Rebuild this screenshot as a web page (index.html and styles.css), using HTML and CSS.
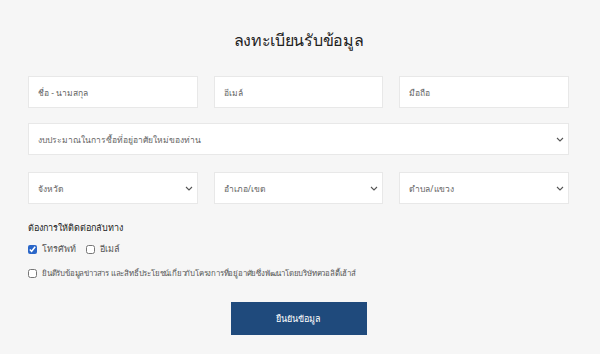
FILE: index.html
```html
<!DOCTYPE html>
<html>
<head>
	<meta charset="utf-8"/>
	<title>ลงทะเบียนรับข้อมูล</title>
	<link rel="stylesheet" href="styles.css">
</head>
<body>
	<div class="wrapper">
		<h1 class="title">ลงทะเบียนรับข้อมูล</h1>
		<form class="regform">
			<div class="row three first">
				<input type="text" class="field" placeholder="ชื่อ - นามสกุล" />
				<input type="text" class="field" placeholder="อีเมล์" />
				<input type="text" class="field" placeholder="มือถือ" />
			</div>
			<div class="row budget">
				<div class="selbox">
					<select class="field">
						<option>งบประมาณในการซื้อที่อยู่อาศัยใหม่ของท่าน</option>
					</select>
					<svg class="chev" width="8" height="5" viewBox="0 0 8 5"><path d="M1 1l3 3 3-3" fill="none" stroke="#555" stroke-width="1.1"/></svg>
				</div>
			</div>
			<div class="row three">
				<div class="selbox">
					<select class="field"><option>จังหวัด</option></select>
					<svg class="chev" width="8" height="5" viewBox="0 0 8 5"><path d="M1 1l3 3 3-3" fill="none" stroke="#555" stroke-width="1.1"/></svg>
				</div>
				<div class="selbox">
					<select class="field"><option>อำเภอ/เขต</option></select>
					<svg class="chev" width="8" height="5" viewBox="0 0 8 5"><path d="M1 1l3 3 3-3" fill="none" stroke="#555" stroke-width="1.1"/></svg>
				</div>
				<div class="selbox">
					<select class="field"><option>ตำบล/แขวง</option></select>
					<svg class="chev" width="8" height="5" viewBox="0 0 8 5"><path d="M1 1l3 3 3-3" fill="none" stroke="#555" stroke-width="1.1"/></svg>
				</div>
			</div>
			<div class="contact">
				<div class="lbl">ต้องการให้ติดต่อกลับทาง</div>
				<div class="checks">
					<label class="chk"><input type="checkbox" checked /> โทรศัพท์</label>
					<label class="chk"><input type="checkbox" /> อีเมล์</label>
				</div>
				<label class="chk consent"><input type="checkbox" /> ยินดีรับข้อมูลข่าวสาร และสิทธิ์ประโยชน์เกี่ยวกับโครงการที่อยู่อาศัยซึ่งพัฒนาโดยบริษัทควอลิตี้เฮ้าส์</label>
			</div>
			<div class="actions">
				<button type="button" class="submit">ยืนยันข้อมูล</button>
			</div>
		</form>
	</div>
</body>
</html>
```
FILE: styles.css
```css
html, body { height:100%; overflow:hidden; }
body { margin:0; background:#f6f6f6; font-family:"Noto Sans", "DejaVu Sans", sans-serif; color:#333; }
.wrapper { padding:25px 31px 0 28px; }
.title { margin:0; font-size:16px; line-height:30px; font-weight:400; text-align:center; color:#222; letter-spacing:-0.3px; }
.regform { margin-top:21px; }
.row { display:flex; gap:16px; }
.row.three > * { flex:1; min-width:0; }
.row > .selbox { flex:1; }
.row.first { margin-bottom:15px; }
.row.budget { margin-bottom:17px; }
.field { box-sizing:border-box; width:100%; height:32px; border:1px solid #e8e8e8; background:#fff; padding:0 9px; font-family:inherit; font-size:8.5px; color:#666; outline:none; border-radius:0; }
.field::placeholder { color:#666; }
select.field { appearance:none; -webkit-appearance:none; }
.selbox { position:relative; }
.chev { position:absolute; right:5px; top:14px; pointer-events:none; }
.contact { margin-top:17px; font-size:9px; }
.lbl { color:#222; line-height:14px; }
.checks { display:flex; gap:10px; margin-top:7px; }
.chk { display:flex; align-items:center; gap:5px; color:#555; line-height:14px; }
.chk input { margin:0; width:9px; height:9px; accent-color:#2a66c8; }
.consent { margin-top:10px; font-size:7.8px; letter-spacing:-0.2px; }
.actions { display:flex; justify-content:center; margin-top:22px; }
.submit { width:136px; height:33px; border:0; background:#1f4a7c; color:#fff; font-family:inherit; font-size:9px; cursor:pointer; }
```
